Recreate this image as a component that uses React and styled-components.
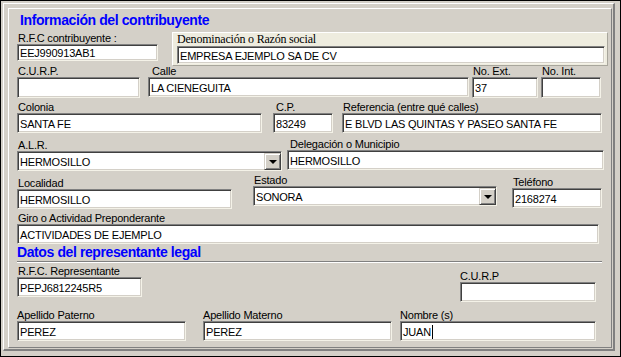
import React from 'react';
import styled, { createGlobalStyle } from 'styled-components';

const GlobalStyle = createGlobalStyle`
  html, body {
    margin: 0;
    padding: 0;
    background: #d4d0c8;
  }
  body {
    font-family: "Liberation Sans", Arial, sans-serif;
  }
`;

const Window = styled.div`
  box-sizing: border-box;
  width: 621px;
  height: 357px;
  border: 1px solid #000;
  padding: 2px 5px 5px 2px;
  background: #d4d0c8;
`;

const Frame = styled.div`
  box-sizing: border-box;
  height: 100%;
  border-style: solid;
  border-width: 1px 2px 2px 1px;
  border-color: #fff #808080 #808080 #fff;
  padding: 4px 1px 1px 4px;
`;

const Panel = styled.div`
  box-sizing: border-box;
  height: 100%;
  border: 1px solid;
  border-color: #fff #808080 #808080 #fff;
  padding: 0 0 0 8px;
`;

const SectionTitle = styled.div`
  font-family: "Liberation Sans", Arial, sans-serif;
  font-weight: bold;
  font-size: 14px;
  letter-spacing: -0.4px;
  line-height: 17px;
  height: 17px;
  color: #0000ff;
  margin-top: ${(p) => p.mt || 0}px;
  padding-left: ${(p) => p.pl || 0}px;
`;

const Separator = styled.div`
  width: 585px;
  height: 0;
  border-top: 1px solid #808080;
  border-bottom: 1px solid #fff;
`;

const Row = styled.div`
  display: flex;
  align-items: flex-start;
  margin-top: ${(p) => p.mt || 0}px;
`;

const Field = styled.div`
  display: flex;
  flex-direction: column;
  flex: none;
  width: ${(p) => p.w}px;
  margin-left: ${(p) => p.ml || 0}px;
  margin-top: ${(p) => p.dy || 0}px;
`;

const Label = styled.div`
  font-size: 11px;
  line-height: 11px;
  height: 11px;
  letter-spacing: -0.2px;
  color: #000;
  white-space: nowrap;
  padding-left: ${(p) => p.pl ?? 1}px;
`;

const Input = styled.div`
  box-sizing: border-box;
  height: ${(p) => p.h || 20}px;
  display: flex;
  align-items: center;
  background: #fff;
  border: 1px solid;
  border-color: #808080 #f4f2e8 #f4f2e8 #808080;
  box-shadow: inset 1px 1px 0 #404040, inset -1px -1px 0 #d4d0c8;
  padding: 1px 2px 0 2px;
  font-size: 11px;
  letter-spacing: -0.2px;
  color: #000;
  white-space: nowrap;
  overflow: hidden;
`;

const Caret = styled.span`
  display: inline-block;
  width: 1px;
  height: 14px;
  background: #000;
  margin-left: 1px;
`;

const SelectBox = styled(Input)`
  padding-right: 2px;
  justify-content: space-between;
`;

const DropButton = styled.div`
  box-sizing: border-box;
  flex: none;
  width: 17px;
  height: 100%;
  background: #d4d0c8;
  border: 1px solid;
  border-color: #d4d0c8 #404040 #404040 #d4d0c8;
  box-shadow: inset 1px 1px 0 #fff, inset -1px -1px 0 #808080;
  display: flex;
  align-items: center;
  justify-content: center;
  margin-right: -2px;
`;

const Arrow = styled.div`
  width: 0;
  height: 0;
  border-left: 4px solid transparent;
  border-right: 4px solid transparent;
  border-top: 4px solid #000;
  margin-top: 1px;
`;

const CreamBox = styled.div`
  box-sizing: border-box;
  flex: none;
  width: 436px;
  height: 34px;
  margin-left: 14px;
  background: #eeecdf;
  border: 1px solid;
  border-color: #fff #a8a69c #a8a69c #fff;
  padding: 0 0 0 4px;
`;

const SerifLabel = styled.div`
  font-family: "Liberation Serif", "Times New Roman", serif;
  font-size: 12px;
  line-height: 12px;
  height: 13px;
  letter-spacing: -0.2px;
  color: #000;
`;

const WideInput = styled(Input)`
  width: 428px;
`;

function Select({ value }) {
  return (
    <SelectBox>
      <span>{value}</span>
      <DropButton>
        <Arrow />
      </DropButton>
    </SelectBox>
  );
}

export default function App() {
  return (
    <>
      <GlobalStyle />
      <Window>
        <Frame>
          <Panel>
            <SectionTitle mt={3} pl={3}>Información del contribuyente</SectionTitle>

            <Row mt={3}>
              <Field w={141} dy={1}>
                <Label>R.F.C contribuyente :</Label>
                <Input h={17}>EEJ990913AB1</Input>
              </Field>
              <CreamBox>
                <SerifLabel>Denominación o Razón social</SerifLabel>
                <WideInput h={18}>EMPRESA EJEMPLO SA DE CV</WideInput>
              </CreamBox>
            </Row>

            <Row>
              <Field w={123}>
                <Label>C.U.R.P.</Label>
                <Input h={21} />
              </Field>
              <Field w={321} ml={8}>
                <Label pl={4}>Calle</Label>
                <Input>LA CIENEGUITA</Input>
              </Field>
              <Field w={66} ml={3}>
                <Label>No. Ext.</Label>
                <Input h={21}>37</Input>
              </Field>
              <Field w={60} ml={3}>
                <Label>No. Int.</Label>
                <Input h={21} />
              </Field>
            </Row>

            <Row mt={4}>
              <Field w={245}>
                <Label>Colonia</Label>
                <Input>SANTA FE</Input>
              </Field>
              <Field w={60} ml={11}>
                <Label pl={3}>C.P.</Label>
                <Input>83249</Input>
              </Field>
              <Field w={260} ml={9}>
                <Label>Referencia (entre qué calles)</Label>
                <Input>E BLVD LAS QUINTAS Y PASEO SANTA FE</Input>
              </Field>
            </Row>

            <Row mt={6}>
              <Field w={265} dy={1}>
                <Label>A.L.R.</Label>
                <Select value="HERMOSILLO" />
              </Field>
              <Field w={317} ml={5}>
                <Label pl={3}>Delegación o Municipio</Label>
                <Input>HERMOSILLO</Input>
              </Field>
            </Row>

            <Row mt={4}>
              <Field w={215} dy={3}>
                <Label>Localidad</Label>
                <Input>HERMOSILLO</Input>
              </Field>
              <Field w={244} ml={21}>
                <Label>Estado</Label>
                <Select value="SONORA" />
              </Field>
              <Field w={90} ml={15} dy={2}>
                <Label>Teléfono</Label>
                <Input>2168274</Input>
              </Field>
            </Row>

            <Row mt={4}>
              <Field w={582}>
                <Label>Giro o Actividad Preponderante</Label>
                <Input>ACTIVIDADES DE EJEMPLO</Input>
              </Field>
            </Row>

            <SectionTitle>Datos del representante legal</SectionTitle>
            <Separator />

            <Row mt={3}>
              <Field w={125}>
                <Label>R.F.C. Representante</Label>
                <Input>PEPJ6812245R5</Input>
              </Field>
              <Field w={136} ml={318} dy={5}>
                <Label pl={0}>C.U.R.P</Label>
                <Input />
              </Field>
            </Row>

            <Row mt={8}>
              <Field w={169}>
                <Label pl={0}>Apellido Paterno</Label>
                <Input>PEREZ</Input>
              </Field>
              <Field w={189} ml={17}>
                <Label pl={0}>Apellido Materno</Label>
                <Input>PEREZ</Input>
              </Field>
              <Field w={196} ml={8}>
                <Label pl={0}>Nombre (s)</Label>
                <Input>
                  JUAN
                  <Caret />
                </Input>
              </Field>
            </Row>
          </Panel>
        </Frame>
      </Window>
    </>
  );
}
